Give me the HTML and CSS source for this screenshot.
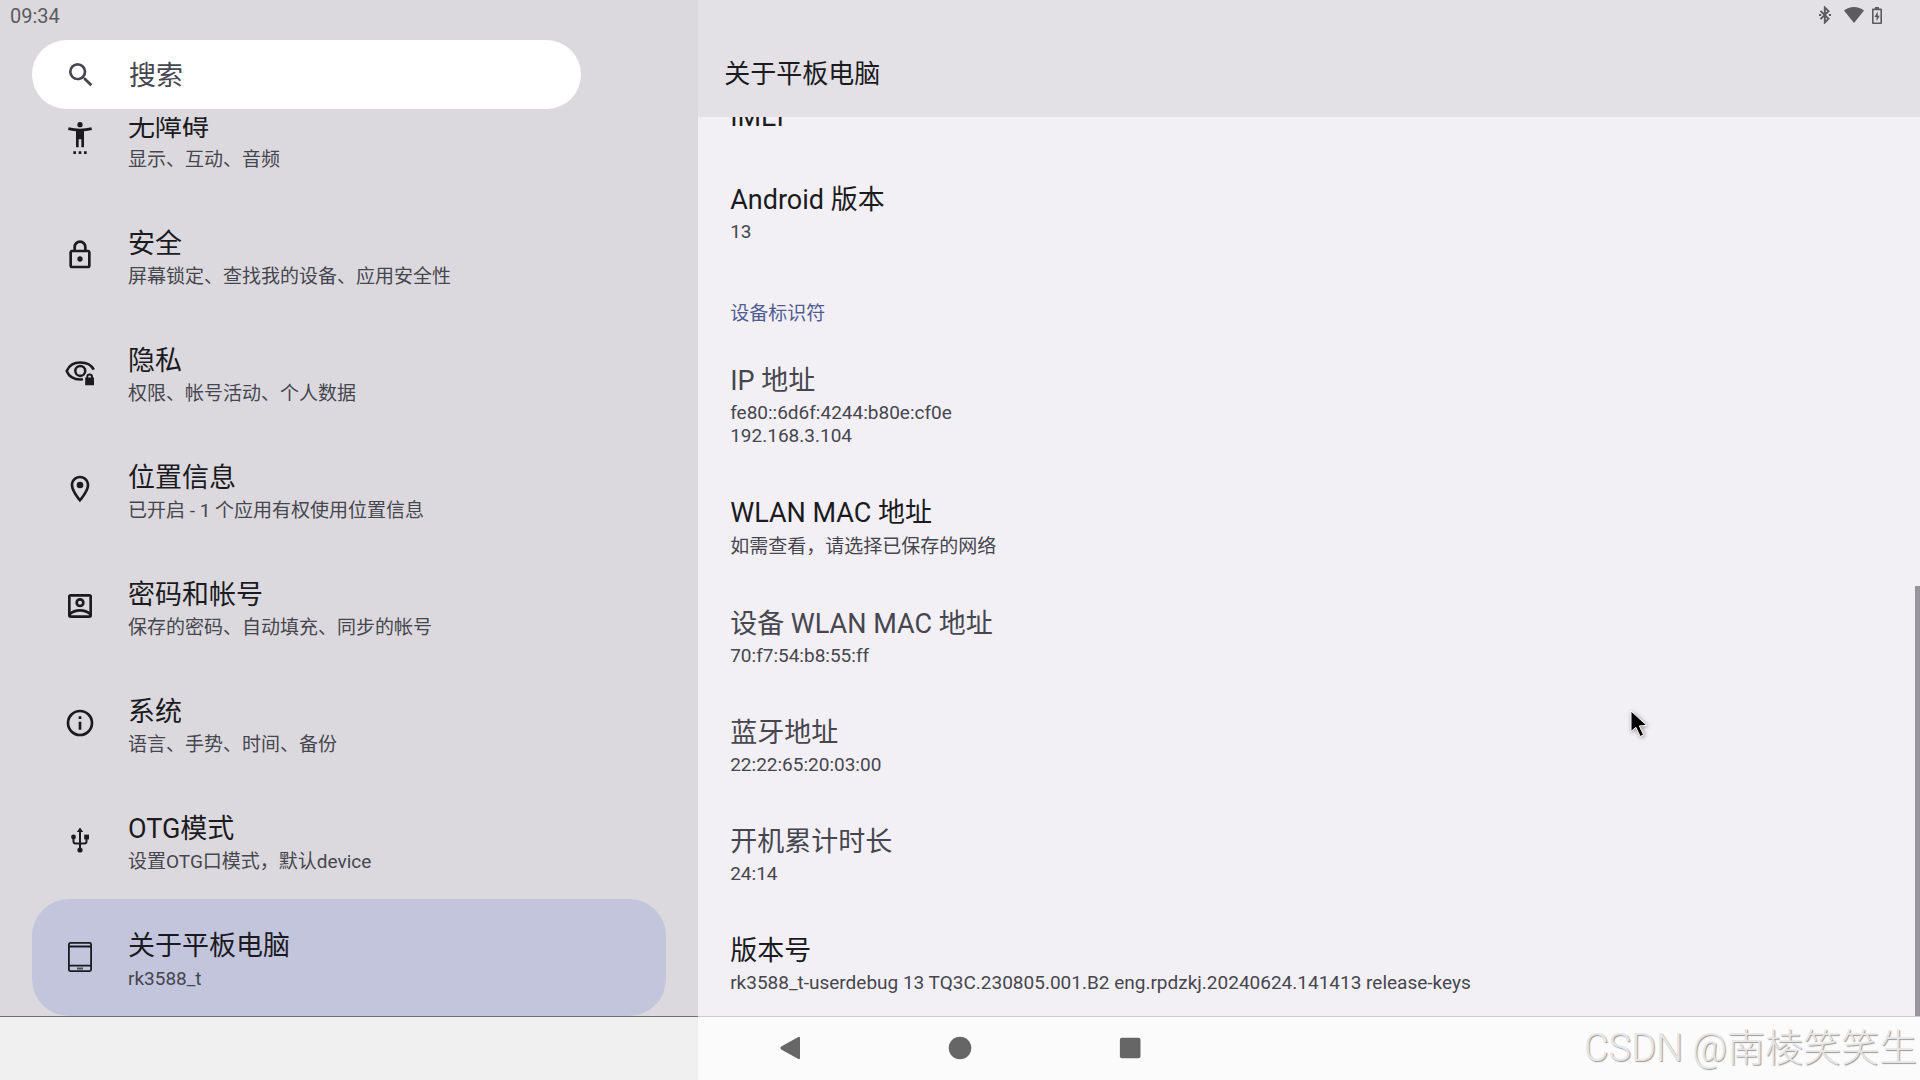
FILE: index.html
```html
<!DOCTYPE html>
<html lang="zh-CN">
<head>
<meta charset="utf-8">
<meta name="viewport" content="width=device-width, initial-scale=1">
<title>关于平板电脑</title>
<link rel="stylesheet" href="styles.css">
</head>
<body>
<div class="screen">
  <div class="panes">
    <aside class="sidebar">
      <div class="status"><time class="clock">09:34</time></div>
      <label class="search">
        <svg class="icon" viewBox="0 0 24 24" aria-hidden="true"><path d="M15.5 14h-.79l-.28-.27A6.47 6.47 0 0 0 16 9.5 6.5 6.5 0 1 0 9.5 16c1.61 0 3.09-.59 4.23-1.57l.27.28v.79l5 4.99L20.49 19l-4.99-5zm-6 0C7.01 14 5 11.99 5 9.5S7.01 5 9.5 5 14 7.01 14 9.5 11.99 14 9.5 14z"/></svg>
        <input class="search-input" type="text" placeholder="搜索" aria-label="搜索">
      </label>
      <nav class="menu">
        <a class="item" href="#accessibility">
          <svg class="icon" viewBox="0 0 24 24" aria-hidden="true"><path d="M20.5 4c-2.61.7-5.67 1-8.5 1S6.11 4.7 3.5 4L3 6c1.86.5 4 .83 6 1v12h2v-6h2v6h2V7c2-.17 4.14-.5 6-1l-.5-2zM12 4a2 2 0 1 0 0-4 2 2 0 0 0 0 4zM7 24h2v-2H7v2zm4 0h2v-2h-2v2zm4 0h2v-2h-2v2z"/></svg>
          <span class="text"><span class="title">无障碍</span><span class="summary">显示、互动、音频</span></span>
        </a>
        <a class="item" href="#security">
          <svg class="icon" viewBox="0 0 24 24" aria-hidden="true"><path d="M18 8h-1V6c0-2.76-2.24-5-5-5S7 3.24 7 6v2H6c-1.1 0-2 .9-2 2v10c0 1.1.9 2 2 2h12c1.1 0 2-.9 2-2V10c0-1.1-.9-2-2-2zM9 6c0-1.66 1.34-3 3-3s3 1.34 3 3v2H9V6zm9 14H6V10h12v10zm-6-3a2 2 0 1 0 0-4 2 2 0 0 0 0 4z"/></svg>
          <span class="text"><span class="title">安全</span><span class="summary">屏幕锁定、查找我的设备、应用安全性</span></span>
        </a>
        <a class="item" href="#privacy">
          <svg class="icon" viewBox="0 0 24 24" aria-hidden="true"><g fill="none" stroke="currentColor" stroke-width="1.9"><path d="M22.300 10.200C20.700 6.800 16.700 4.800 12.200 4.800 7.500 4.800 3.600 7.300 2 11.200c1.600 3.900 5.500 6.400 10.200 6.400.7 0 1.400 0 2-.1"/><circle cx="12.200" cy="11.200" r="3.700"/></g><path fill-rule="evenodd" d="M15.900 16.200h.8v-.6a2.500 2.500 0 0 1 5 0v.6h.8V22h-6.600zM18.200 16.200h2v-.6a1 1 0 0 0-2 0z"/></svg>
          <span class="text"><span class="title">隐私</span><span class="summary">权限、帐号活动、个人数据</span></span>
        </a>
        <a class="item" href="#location">
          <svg class="icon" viewBox="0 0 24 24" aria-hidden="true"><path d="M12 2C8.13 2 5 5.13 5 9c0 5.25 7 13 7 13s7-7.75 7-13c0-3.87-3.13-7-7-7zM7 9c0-2.76 2.24-5 5-5s5 2.24 5 5c0 2.88-2.88 7.19-5 9.88C9.92 16.21 7 11.85 7 9z"/><circle cx="12" cy="9" r="2.5"/></svg>
          <span class="text"><span class="title">位置信息</span><span class="summary">已开启 - 1 个应用有权使用位置信息</span></span>
        </a>
        <a class="item" href="#accounts">
          <svg class="icon" viewBox="0 0 24 24" aria-hidden="true"><g fill="none" stroke="currentColor" stroke-width="2"><rect x="4" y="4" width="16" height="16" rx="1"/><circle cx="12" cy="9.5" r="2.5"/><path d="M4 18.300c2-1.800 4.800-3 8-3s6 1.200 8 3"/></g></svg>
          <span class="text"><span class="title">密码和帐号</span><span class="summary">保存的密码、自动填充、同步的帐号</span></span>
        </a>
        <a class="item" href="#system">
          <svg class="icon" viewBox="0 0 24 24" aria-hidden="true"><path d="M11 7h2v2h-2zm0 4h2v6h-2zm1-9a10 10 0 1 0 0 20 10 10 0 0 0 0-20zm0 18a8 8 0 1 1 0-16 8 8 0 0 1 0 16z"/></svg>
          <span class="text"><span class="title">系统</span><span class="summary">语言、手势、时间、备份</span></span>
        </a>
        <a class="item" href="#otg">
          <svg class="icon" viewBox="0 0 32 32" aria-hidden="true"><g fill="none" stroke="currentColor" stroke-width="2"><path d="M16 6v21M9.500 13v4.500a2 2 0 0 0 2 2h9a2 2 0 0 0 2-2V13"/></g><path d="M16 3.500l3.200 4.500h-6.400z"/><circle cx="9.500" cy="13" r="2.400"/><circle cx="16" cy="26" r="2.600"/><path d="M20.200 10.600h4.800v4.800h-4.800z"/></svg>
          <span class="text"><span class="title">OTG模式</span><span class="summary">设置OTG口模式，默认device</span></span>
        </a>
        <a class="item selected" href="#about" aria-current="page">
          <svg class="icon" viewBox="0 0 32 32" aria-hidden="true"><g fill="none" stroke="currentColor" stroke-width="1.8"><rect x="4.900" y="1.900" width="22.200" height="28.200" rx="1.500"/><path d="M5 5.500h22M5 24.700h22"/></g><path d="M13 26.500h6v2h-6z" opacity=".7"/></svg>
          <span class="text"><span class="title">关于平板电脑</span><span class="summary">rk3588_t</span></span>
        </a>
      </nav>
    </aside>
    <main class="detail">
      <header class="header">
        <div class="status status-end">
          <svg class="bluetooth" viewBox="0 0 12 18" role="img" aria-label="蓝牙"><path d="M1.500 4.800l8 8L5.800 16.500v-15L9.500 5.200l-8 8" fill="none" stroke="currentColor" stroke-width="1.900"/><path d="M0 8h2.200v2H0zM9.800 8H12v2H9.800z"/></svg>
          <svg class="wifi" viewBox="0 0 20 16" role="img" aria-label="WLAN"><path d="M10 16L0 3.600C2.700 1.300 6.200 0 10 0s7.300 1.300 10 3.600z"/></svg>
          <svg class="battery" viewBox="0 0 10 17" role="img" aria-label="正在充电"><path fill-rule="evenodd" d="M3 0h4v1.600h2a1 1 0 0 1 1 1V16a1 1 0 0 1-1 1H1a1 1 0 0 1-1-1V2.600a1 1 0 0 1 1-1h2zM1.600 3.200v12.200h6.800V3.200z"/><path d="M5.800 4.500L2.300 10h2.200v4.200L7.800 8.700H5.800z"/></svg>
        </div>
        <h1 class="heading">关于平板电脑</h1>
      </header>
      <div class="content">
        <section class="row row-single"><h2 class="title">IMEI</h2></section>
        <section class="row"><h2 class="title">Android 版本</h2><p class="summary">13</p></section>
        <p class="category">设备标识符</p>
        <section class="row muted"><h2 class="title">IP 地址</h2><p class="summary">fe80::6d6f:4244:b80e:cf0e<br>192.168.3.104</p></section>
        <section class="row"><h2 class="title">WLAN MAC 地址</h2><p class="summary summary-cjk">如需查看，请选择已保存的网络</p></section>
        <section class="row muted"><h2 class="title">设备 WLAN MAC 地址</h2><p class="summary">70:f7:54:b8:55:ff</p></section>
        <section class="row muted"><h2 class="title">蓝牙地址</h2><p class="summary">22:22:65:20:03:00</p></section>
        <section class="row muted"><h2 class="title">开机累计时长</h2><p class="summary">24:14</p></section>
        <section class="row"><h2 class="title">版本号</h2><p class="summary">rk3588_t-userdebug 13 TQ3C.230805.001.B2 eng.rpdzkj.20240624.141413 release-keys</p></section>
        <div class="scrollbar"></div>
        <svg class="cursor" viewBox="0 0 24 34" aria-hidden="true"><path d="M3 3v20.500l4.800-4.200 4.400 9.200 3.400-1.600-4.200-8.900 7.400-.6z" fill="#000" stroke="#fff" stroke-width="1"/></svg>
      </div>
    </main>
  </div>
  <footer class="navbar">
    <button class="nav-button" type="button" aria-label="返回"><svg class="nav-icon" viewBox="0 0 24 24" aria-hidden="true"><path d="M22 1.800v20.400a1 1 0 0 1-1.600.8L3.200 13.400a1.700 1.700 0 0 1 0-2.800L20.400 1a1 1 0 0 1 1.600.8z"/></svg></button>
    <button class="nav-button" type="button" aria-label="主屏幕"><svg class="nav-icon" viewBox="0 0 24 24" aria-hidden="true"><circle cx="12" cy="12" r="11.300"/></svg></button>
    <button class="nav-button" type="button" aria-label="最近使用的应用"><svg class="nav-icon" viewBox="0 0 24 24" aria-hidden="true"><rect x="1.900" y="1.700" width="20.600" height="20.600" rx="2"/></svg></button>
    <span class="watermark">CSDN @南棱笑笑生</span>
  </footer>
</div>
</body>
</html>
```

FILE: styles.css
```css
* {
  box-sizing: border-box;
}

body {
  margin: 0;
  font-family: Roboto, "Noto Sans CJK SC", sans-serif;
  color: #1b1b1f;
}

.screen {
  display: flex;
  flex-direction: column;
  height: 100vh;
  overflow: hidden;
}

.panes {
  flex: 1;
  min-height: 0;
  display: grid;
  grid-template-columns: 4fr 7fr;
  grid-template-rows: minmax(0, 1fr);
}

.sidebar,
.detail {
  display: flex;
  flex-direction: column;
  min-width: 0;
}

.sidebar {
  background: #dbd9dd;
  border-bottom: 1px solid #6e6d6f;
}

.detail {
  background: #f2f0f4;
  border-bottom: 1px solid #cecdd0;
}

.status {
  flex: none;
  display: flex;
  align-items: center;
  height: 32px;
  padding: 0 10px;
  color: #5c5b5e;
}

.clock {
  font-size: 20px;
  line-height: 32px;
}

.status-end {
  justify-content: flex-end;
  gap: 8px;
  padding: 0 38px 2px;
}

.status-end svg {
  fill: currentColor;
}

.bluetooth {
  width: 12px;
  height: 18px;
  margin-right: 5px;
}

.wifi {
  width: 20px;
  height: 16px;
}

.battery {
  width: 10px;
  height: 17px;
}

.search {
  flex: none;
  display: flex;
  align-items: center;
  gap: 32px;
  height: 69px;
  margin: 8px 117px 8px 32px;
  padding: 0 33px;
  border-radius: 35px;
  background: #fff;
  color: #46464f;
}

.search-input {
  flex: 1;
  min-width: 0;
  padding: 2px 0 0;
  border: 0;
  outline: 0;
  background: none;
  color: inherit;
  font: inherit;
  font-size: 27px;
  line-height: 40px;
}

.search-input::placeholder {
  color: inherit;
  opacity: 1;
}

.icon {
  flex: none;
  width: 32px;
  height: 32px;
  fill: currentColor;
}

.menu,
.content {
  flex: 1;
  min-height: 0;
  display: flex;
  flex-direction: column;
  justify-content: flex-end;
  overflow: hidden;
}

.menu {
  padding: 0 32px;
}

.item {
  flex: none;
  display: flex;
  align-items: center;
  gap: 32px;
  padding: 22px 32px 24px;
  color: inherit;
  text-decoration: none;
}

.item .summary {
  line-height: 26px;
}

.selected {
  border-radius: 37px;
  background: #c3c5dd;
}

.text {
  display: flex;
  flex-direction: column;
  padding-top: 5px;
}

.title {
  margin: 0;
  font-size: 27px;
  font-weight: 400;
  line-height: 40px;
}

.summary {
  margin: 0;
  font-size: 19px;
  line-height: 23px;
  color: #46464f;
}

.summary-cjk {
  padding-top: 2px;
}

.header {
  flex: none;
  height: 117px;
  background: #e3e1e6;
}

.heading {
  margin: 0;
  padding: 22px 26px;
  font-size: 26px;
  font-weight: 400;
  line-height: 40px;
}

.content {
  position: relative;
}

.row {
  flex: none;
  padding: 24px 32px 22px;
}

.row-single {
  padding: 19px 32px;
}

.muted {
  color: #46464f;
}

.category {
  flex: none;
  margin: 0;
  padding: 36px 32px 11px;
  font-size: 19px;
  line-height: 25px;
  color: #4f5b92;
}

.scrollbar {
  position: absolute;
  right: 0;
  bottom: 0;
  width: 5px;
  height: 430px;
  background: #98969d;
}

.cursor {
  position: absolute;
  right: 268px;
  bottom: 274px;
  width: 24px;
  height: 34px;
  filter: drop-shadow(1px 1px 2px rgba(0, 0, 0, 0.4));
}

.navbar {
  position: relative;
  flex: none;
  display: flex;
  justify-content: center;
  align-items: center;
  gap: 106px;
  height: 63px;
  padding-bottom: 2px;
  background: linear-gradient(to right, #f0f0f0 36.36%, #fbfbfb 36.36%);
}

.nav-button {
  display: grid;
  place-items: center;
  width: 64px;
  height: 48px;
  padding: 0;
  border: 0;
  background: none;
  color: #666;
}

.nav-icon {
  width: 24px;
  height: 24px;
  fill: currentColor;
}

.watermark {
  position: absolute;
  right: 3px;
  top: 3px;
  font-size: 38px;
  font-weight: 300;
  line-height: 56px;
  color: #e6e6e6;
  text-shadow: 1px 1px 1px #999;
}
```
